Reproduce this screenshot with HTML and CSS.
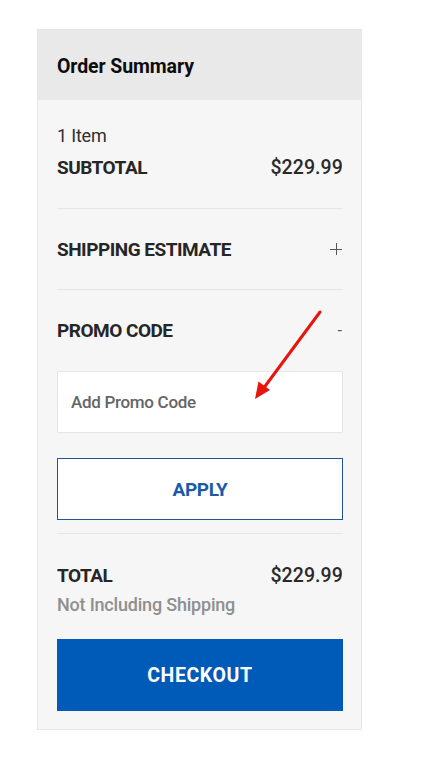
FILE: index.html
```html
<!DOCTYPE html>
<html lang="en">
<head>
<meta charset="utf-8">
<title>Order Summary</title>
<link rel="stylesheet" href="styles.css">
</head>
<body>
<section class="summary">
  <header class="summary-head">
    <h2 class="summary-title">Order Summary</h2>
  </header>
  <div class="summary-body">
    <div class="subtotal-block">
      <div class="items">1 Item</div>
      <div class="row">
        <span class="label">SUBTOTAL</span>
        <span class="price">$229.99</span>
      </div>
    </div>
    <div class="toggle-row">
      <span class="label">SHIPPING ESTIMATE</span>
      <span class="plus" aria-hidden="true"></span>
    </div>
    <div class="promo-block">
      <div class="promo-head">
        <span class="label">PROMO CODE</span>
        <span class="minus">-</span>
      </div>
      <input class="promo-input" type="text" placeholder="Add Promo Code">
      <button class="apply-btn" type="button">APPLY</button>
    </div>
    <div class="total-block">
      <div class="row">
        <span class="label">TOTAL</span>
        <span class="price">$229.99</span>
      </div>
      <div class="note">Not Including Shipping</div>
      <button class="checkout-btn" type="button">CHECKOUT</button>
    </div>
  </div>
</section>
<svg class="annotation" width="425" height="761" viewBox="0 0 425 761" aria-hidden="true">
  <line x1="320" y1="312" x2="263" y2="389" stroke="#e8150f" stroke-width="3" stroke-linecap="round"/>
  <polygon points="255,399 258.5,381.5 270,390" fill="#e8150f"/>
</svg>
</body>
</html>
```

FILE: styles.css
```css
* { box-sizing: border-box; }

html, body {
  margin: 0;
  padding: 0;
  background: #ffffff;
}

body {
  font-family: Roboto, "Liberation Sans", sans-serif;
  color: #333333;
}

.summary {
  width: 325px;
  margin: 29px 0 0 37px;
  border: 1px solid #e6e6e6;
  background: #f6f6f6;
}

.summary-head {
  height: 70px;
  background: #e9e9e9;
  display: flex;
  align-items: center;
  padding: 2px 19px 0;
}

.summary-title {
  margin: 0;
  font-size: 19.5px;
  font-weight: 700;
  letter-spacing: -0.1px;
  color: #0d0d0d;
}

.summary-body {
  padding: 0 18px 18px 19px;
}

.label {
  font-size: 19px;
  font-weight: 700;
  letter-spacing: -0.5px;
  color: #262626;
}

.price {
  font-size: 19.5px;
  font-weight: 500;
  letter-spacing: 0.1px;
  color: #2a2a2a;
}

.row {
  display: flex;
  justify-content: space-between;
  align-items: center;
  height: 24px;
}

.subtotal-block {
  padding: 24px 0 29px;
  border-bottom: 1px solid #e6e6e6;
}

.items {
  height: 23px;
  line-height: 23px;
  font-size: 18px;
  letter-spacing: -0.2px;
  color: #2f2f2f;
  margin-bottom: 8px;
}

.toggle-row {
  height: 81px;
  display: flex;
  justify-content: space-between;
  align-items: center;
  border-bottom: 1px solid #e6e6e6;
}

.plus {
  position: relative;
  width: 12px;
  height: 12px;
  margin-right: 1px;
}

.plus::before,
.plus::after {
  content: "";
  position: absolute;
  background: #555555;
}

.plus::before {
  left: 0;
  top: 5.5px;
  width: 12px;
  height: 1px;
}

.plus::after {
  left: 5.5px;
  top: 0;
  width: 1px;
  height: 12px;
}

.promo-block {
  padding: 28px 0 13px;
  border-bottom: 1px solid #e6e6e6;
  display: flex;
  flex-direction: column;
}

.promo-head {
  height: 24px;
  display: flex;
  justify-content: space-between;
  align-items: center;
}

.minus {
  font-size: 16px;
  color: #555555;
  margin-right: 1px;
}

.promo-input {
  margin-top: 29px;
  height: 62px;
  width: 100%;
  border: 1px solid #e6e6e6;
  background: #ffffff;
  padding: 0 13px;
  font-family: inherit;
  font-size: 17px;
  font-weight: 500;
  letter-spacing: -0.3px;
  color: #333333;
  outline: none;
}

.promo-input::placeholder {
  color: #656565;
  opacity: 1;
}

.apply-btn {
  margin-top: 25px;
  height: 62px;
  width: 100%;
  border: 1px solid #1f5592;
  background: #ffffff;
  color: #1b5ba6;
  font-family: inherit;
  font-size: 19px;
  font-weight: 700;
  letter-spacing: -0.4px;
  cursor: pointer;
}

.total-block {
  padding-top: 29px;
  display: flex;
  flex-direction: column;
}

.note {
  margin-top: 6px;
  height: 23px;
  line-height: 23px;
  font-size: 18px;
  font-weight: 500;
  letter-spacing: -0.2px;
  color: #8f8f8f;
}

.checkout-btn {
  margin-top: 23px;
  height: 72px;
  width: 100%;
  border: none;
  background: #005bb8;
  color: #ffffff;
  font-family: inherit;
  font-size: 19.5px;
  font-weight: 700;
  letter-spacing: 0.6px;
  cursor: pointer;
}

.annotation {
  position: absolute;
  left: 0;
  top: 0;
  pointer-events: none;
}
```
